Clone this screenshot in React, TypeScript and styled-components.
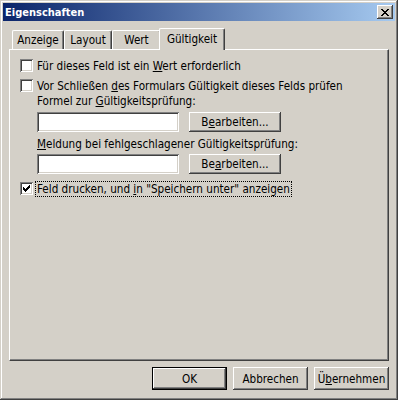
import React from "react";
import styled, { createGlobalStyle } from "styled-components";

const GlobalStyle = createGlobalStyle`
	html, body {
		margin: 0;
		padding: 0;
		background: #d4d0c8;
	}
	body {
		font-family: "DejaVu Sans Condensed", "DejaVu Sans", sans-serif;
		font-size: 11.6px;
		color: #000;
	}
`;

const Window = styled.div`
	width: 398px;
	height: 400px;
	box-sizing: border-box;
	padding: 3px;
	background: #d4d0c8;
	display: flex;
	flex-direction: column;
	box-shadow: inset -1px -1px #404040, inset 1px 1px #d4d0c8,
		inset -2px -2px #808080, inset 2px 2px #ffffff;
`;

const TitleBar = styled.div`
	height: 18px;
	flex: 0 0 18px;
	display: flex;
	align-items: center;
	justify-content: space-between;
	padding: 0 2px 0 2px;
	background: linear-gradient(to right, #0a246a, #a6caf0);
`;

const Title = styled.span`
	color: #fff;
	font-weight: bold;
	font-size: 11px;
`;

const CloseButton = styled.div`
	width: 16px;
	height: 14px;
	box-sizing: border-box;
	background: #d4d0c8;
	display: flex;
	align-items: center;
	justify-content: center;
	box-shadow: inset -1px -1px #404040, inset 1px 1px #ffffff,
		inset -2px -2px #808080;
`;

const Body = styled.div`
	flex: 1;
	display: flex;
	flex-direction: column;
	padding: 7px 6px 7px 6px;
`;

const TabStrip = styled.div`
	height: 21px;
	display: flex;
	align-items: flex-end;
	padding-left: 3px;
	position: relative;
	z-index: 2;
`;

const Tab = styled.div<{ $w: number; $active?: boolean }>`
	width: ${(p) => p.$w}px;
	height: ${(p) => (p.$active ? 22 : 19)}px;
	margin: ${(p) => (p.$active ? "0 -2px -1px -2px" : "0")};
	box-sizing: border-box;
	display: flex;
	align-items: center;
	justify-content: center;
	padding-bottom: ${(p) => (p.$active ? 2 : 0)}px;
	background: #d4d0c8;
	border-top: 1px solid #fff;
	border-left: 1px solid #fff;
	border-right: 1px solid #404040;
	border-top-left-radius: 2px;
	border-top-right-radius: 2px;
	box-shadow: inset -1px 0 #808080;
	position: relative;
	z-index: ${(p) => (p.$active ? 3 : 1)};
`;

const Panel = styled.div`
	flex: 1;
	box-sizing: border-box;
	display: flex;
	flex-direction: column;
	padding: 0 0 0 10px;
	border-top: 1px solid #fff;
	border-left: 1px solid #fff;
	border-right: 1px solid #404040;
	border-bottom: 1px solid #404040;
	box-shadow: inset -1px -1px #808080;
	position: relative;
	z-index: 1;
`;

const CheckRow = styled.div<{ $top: number }>`
	margin-top: ${(p) => p.$top}px;
	height: 13px;
	display: flex;
	align-items: center;
	gap: 4px;
`;

const Box = styled.div`
	width: 13px;
	height: 13px;
	flex: 0 0 13px;
	box-sizing: border-box;
	background: #fff;
	display: flex;
	align-items: center;
	justify-content: center;
	box-shadow: inset 1px 1px #808080, inset -1px -1px #ffffff,
		inset 2px 2px #404040, inset -2px -2px #d4d0c8;
`;

const CheckText = styled.span<{ $focus?: boolean }>`
	line-height: 14px;
	padding: 0 1px;
	margin-left: -1px;
	white-space: nowrap;
	outline: ${(p) => (p.$focus ? "1px dotted #000" : "none")};
`;

const FieldLabel = styled.div<{ $top: number }>`
	margin-top: ${(p) => p.$top}px;
	margin-left: 17px;
	height: 13px;
	line-height: 13px;
	white-space: nowrap;
`;

const FieldRow = styled.div<{ $top: number }>`
	margin-top: ${(p) => p.$top}px;
	margin-left: 17px;
	display: flex;
	gap: 10px;
`;

const TextBox = styled.div`
	width: 142px;
	height: 20px;
	box-sizing: border-box;
	background: #fff;
	box-shadow: inset 1px 1px #808080, inset -1px -1px #ffffff,
		inset 2px 2px #404040, inset -2px -2px #d4d0c8;
`;

const Button = styled.div<{ $w: number; $h: number; $default?: boolean }>`
	width: ${(p) => p.$w}px;
	height: ${(p) => p.$h}px;
	box-sizing: border-box;
	display: flex;
	align-items: center;
	justify-content: center;
	background: #d4d0c8;
	white-space: nowrap;
	box-shadow: ${(p) =>
		p.$default
			? "inset 0 0 0 1px #000, inset -2px -2px #404040, inset 2px 2px #ffffff, inset -3px -3px #808080"
			: "inset -1px -1px #404040, inset 1px 1px #ffffff, inset -2px -2px #808080"};
`;

const ButtonRow = styled.div`
	margin-top: 6px;
	display: flex;
	justify-content: flex-end;
	gap: 6px;
`;

const U = styled.span`
	text-decoration: underline;
	text-underline-offset: 1px;
`;

const CloseGlyph = () => (
	<svg width="8" height="7" viewBox="0 0 8 7" shapeRendering="crispEdges">
		<path
			fill="#000"
			d="M0 0h2v1h-2z M6 0h2v1h-2z M1 1h2v1h-2z M5 1h2v1h-2z M2 2h4v1h-4z M3 3h2v1h-2z M2 4h4v1h-4z M1 5h2v1h-2z M5 5h2v1h-2z M0 6h2v1h-2z M6 6h2v1h-2z"
		/>
	</svg>
);

const CheckGlyph = () => (
	<svg width="7" height="7" viewBox="0 0 7 7" shapeRendering="crispEdges">
		<path
			fill="#000"
			d="M6 0h1v1h-1z M5 1h2v1h-2z M0 2h1v1h-1z M4 2h3v1h-3z M0 3h2v1h-2z M3 3h3v1h-3z M0 4h5v1h-5z M1 5h3v1h-3z M2 6h1v1h-1z"
		/>
	</svg>
);

const App = () => (
	<>
		<GlobalStyle />
		<Window>
			<TitleBar>
				<Title>Eigenschaften</Title>
				<CloseButton>
					<CloseGlyph />
				</CloseButton>
			</TitleBar>
			<Body>
				<TabStrip>
					<Tab $w={52}>Anzeige</Tab>
					<Tab $w={48}>Layout</Tab>
					<Tab $w={49}>Wert</Tab>
					<Tab $w={66} $active>
						Gültigkeit
					</Tab>
				</TabStrip>
				<Panel>
					<CheckRow $top={9}>
						<Box />
						<CheckText>
							Für dieses Feld ist ein <U>W</U>ert erforderlich
						</CheckText>
					</CheckRow>
					<CheckRow $top={7}>
						<Box />
						<CheckText>
							Vor Schließen <U>d</U>es Formulars Gültigkeit dieses Felds prüfen
						</CheckText>
					</CheckRow>
					<FieldLabel $top={3}>
						Formel zur <U>G</U>ültigkeitsprüfung:
					</FieldLabel>
					<FieldRow $top={4}>
						<TextBox />
						<Button $w={92} $h={20}>
							B<U>e</U>arbeiten...
						</Button>
					</FieldRow>
					<FieldLabel $top={6}>
						<U>M</U>eldung bei fehlgeschlagener Gültigkeitsprüfung:
					</FieldLabel>
					<FieldRow $top={3}>
						<TextBox />
						<Button $w={92} $h={20}>
							Be<U>a</U>rbeiten...
						</Button>
					</FieldRow>
					<CheckRow $top={8}>
						<Box>
							<CheckGlyph />
						</Box>
						<CheckText $focus>
							Feld drucken, und <U>i</U>n "Speichern unter" anzeigen
						</CheckText>
					</CheckRow>
				</Panel>
				<ButtonRow>
					<Button $w={75} $h={23} $default>
						OK
					</Button>
					<Button $w={75} $h={23}>
						Abbrechen
					</Button>
					<Button $w={75} $h={23}>
						Ü<U>b</U>ernehmen
					</Button>
				</ButtonRow>
			</Body>
		</Window>
	</>
);

export default App;
